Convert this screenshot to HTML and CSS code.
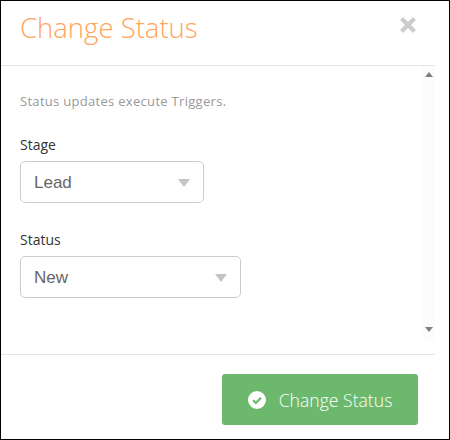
FILE: index.html
```html
<!DOCTYPE html>
<html lang="en">
<head>
    <meta charset="UTF-8">
    <meta name="viewport" content="width=device-width, initial-scale=1.0">
    <title>Change Status</title>
    <link rel="stylesheet" href="styles.css">
</head>
<body>
    <div class="modal">
        <div class="modal-inner">
            <div class="modal-header">
                <h1>Change Status</h1>
                <svg class="close-icon" width="16" height="16" viewBox="0 0 16 16"><path d="M3 3L13 13M13 3L3 13" stroke="#cccccc" stroke-width="4.2" stroke-linecap="square" fill="none"/></svg>
            </div>
            <div class="modal-body">
                <div class="form">
                    <p class="hint">Status updates execute Triggers.</p>
                    <label class="field-label">Stage</label>
                    <div class="select select-stage">
                        <span>Lead</span>
                        <i class="caret"></i>
                    </div>
                    <label class="field-label">Status</label>
                    <div class="select select-status">
                        <span>New</span>
                        <i class="caret"></i>
                    </div>
                </div>
                <div class="scrollbar">
                    <i class="arrow-up"></i>
                    <i class="arrow-down"></i>
                </div>
            </div>
            <div class="modal-footer">
                <button class="submit-btn">
                    <svg width="18" height="18" viewBox="0 0 18 18"><circle cx="9" cy="9" r="9" fill="#fff"/><path d="M5 9.2L7.9 12L13 6.8" stroke="#6cb96d" stroke-width="2.2" fill="none"/></svg>
                    Change Status
                </button>
            </div>
        </div>
    </div>
</body>
</html>
```

FILE: styles.css
```css
* {
    box-sizing: border-box;
}
body {
    margin: 0;
    background: white;
}
.modal {
    width: 450px;
    height: 440px;
    border: 1px solid black;
    font-family: 'Open Sans', sans-serif;
}
.modal-inner {
    width: 434px;
}
.modal-header {
    height: 65px;
    display: flex;
    justify-content: space-between;
    align-items: flex-start;
    padding: 10px 0 0 19px;
    border-bottom: 1px solid #e5e5e5;
    position: relative;
}
h1 {
    margin: 0;
    font-size: 27.5px;
    line-height: 34px;
    font-weight: 300;
    color: #ffa45c;
}
.close-icon {
    position: absolute;
    top: 16px;
    left: 399px;
}
.modal-body {
    height: 288px;
    display: flex;
}
.form {
    flex: 1;
    padding: 26px 0 0 19px;
}
.hint {
    margin: 0 0 26px;
    font-size: 13px;
    line-height: 18px;
    letter-spacing: 0.3px;
    color: #999999;
}
.field-label {
    display: block;
    font-size: 14px;
    line-height: 18px;
    margin-bottom: 7px;
    color: #333333;
}
.select {
    height: 42px;
    display: flex;
    justify-content: space-between;
    align-items: center;
    padding: 1px 13px 0 13px;
    margin-bottom: 28px;
    border: 1px solid #cccccc;
    border-radius: 5px;
    font-family: 'Liberation Sans', sans-serif;
    font-size: 17px;
    color: #666666;
}
.select-stage {
    width: 184px;
}
.select-status {
    width: 221px;
}
.caret {
    width: 0;
    height: 0;
    border-left: 6.5px solid transparent;
    border-right: 6.5px solid transparent;
    border-top: 8px solid #c4c4c4;
}
.scrollbar {
    width: 13px;
    height: 274px;
    background: #fcfcfc;
    display: flex;
    flex-direction: column;
    justify-content: space-between;
    align-items: center;
    padding: 6px 0 8px;
}
.arrow-up, .arrow-down {
    width: 0;
    height: 0;
    border-left: 4.5px solid transparent;
    border-right: 4.5px solid transparent;
}
.arrow-up {
    border-bottom: 5px solid #808080;
}
.arrow-down {
    border-top: 5px solid #808080;
}
.modal-footer {
    height: 85px;
    border-top: 1px solid #e5e5e5;
    display: flex;
    justify-content: flex-end;
    padding: 19px 17px 0 0;
}
.submit-btn {
    width: 196px;
    height: 51px;
    display: flex;
    align-items: center;
    justify-content: center;
    gap: 13px;
    border: none;
    border-radius: 3px;
    background: #6cb96d;
    color: white;
    font-family: 'Open Sans', sans-serif;
    font-size: 17.6px;
    font-weight: 300;
}
```
